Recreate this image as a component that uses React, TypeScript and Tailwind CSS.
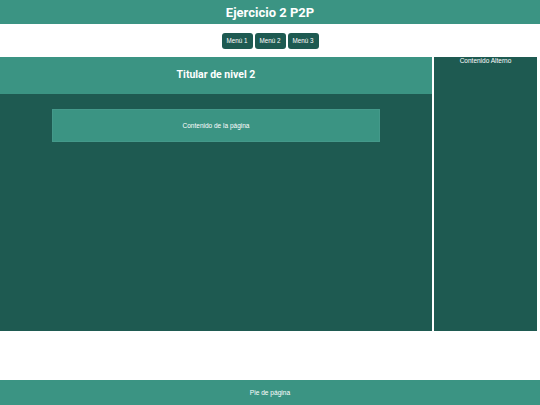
export default function App() {
  const menus = ['Menú 1', 'Menú 2', 'Menú 3'];

  return (
    <div className="w-[540px] h-[405px] flex flex-col bg-white font-['Liberation_Sans',Arial,sans-serif] text-white">
      {/* Header */}
      <header className="h-[24px] shrink-0 bg-[#3b9483] flex items-center justify-center">
        <h1 className="font-['Roboto','Liberation_Sans',sans-serif] text-[13px] font-bold leading-none">Ejercicio 2 P2P</h1>
      </header>

      {/* Nav */}
      <nav className="h-[33px] shrink-0 flex items-center justify-center gap-[2px]">
        {menus.map((m) => (
          <button
            key={m}
            className="h-[16px] w-[31px] rounded-[3px] bg-[#1e5a51] text-[6.3px] text-white flex items-center justify-center"
          >
            {m}
          </button>
        ))}
      </nav>

      {/* Main area */}
      <div className="h-[274px] shrink-0 flex gap-[2px] pr-[3px]">
        <section className="w-[432px] flex flex-col bg-[#1e5a51]">
          <div className="h-[37px] bg-[#3b9483] flex items-center justify-center">
            <h2 className="font-['Roboto','Liberation_Sans',sans-serif] text-[10.5px] font-bold leading-none">Titular de nivel 2</h2>
          </div>
          <div className="flex justify-center pt-[15px]">
            <div className="w-[328px] h-[33px] bg-[#3b9483] border border-[#44998a] flex items-center justify-center text-[6.5px]">
              Contenido de la página
            </div>
          </div>
        </section>
        <aside className="flex-1 bg-[#1e5a51] text-center text-[6.5px] leading-[8px]">
          Contenido Alterno
        </aside>
      </div>

      <div className="flex-1" />

      {/* Footer */}
      <footer className="h-[25px] shrink-0 bg-[#3b9483] flex items-center justify-center text-[6.6px]">
        Pie de página
      </footer>
    </div>
  );
}
